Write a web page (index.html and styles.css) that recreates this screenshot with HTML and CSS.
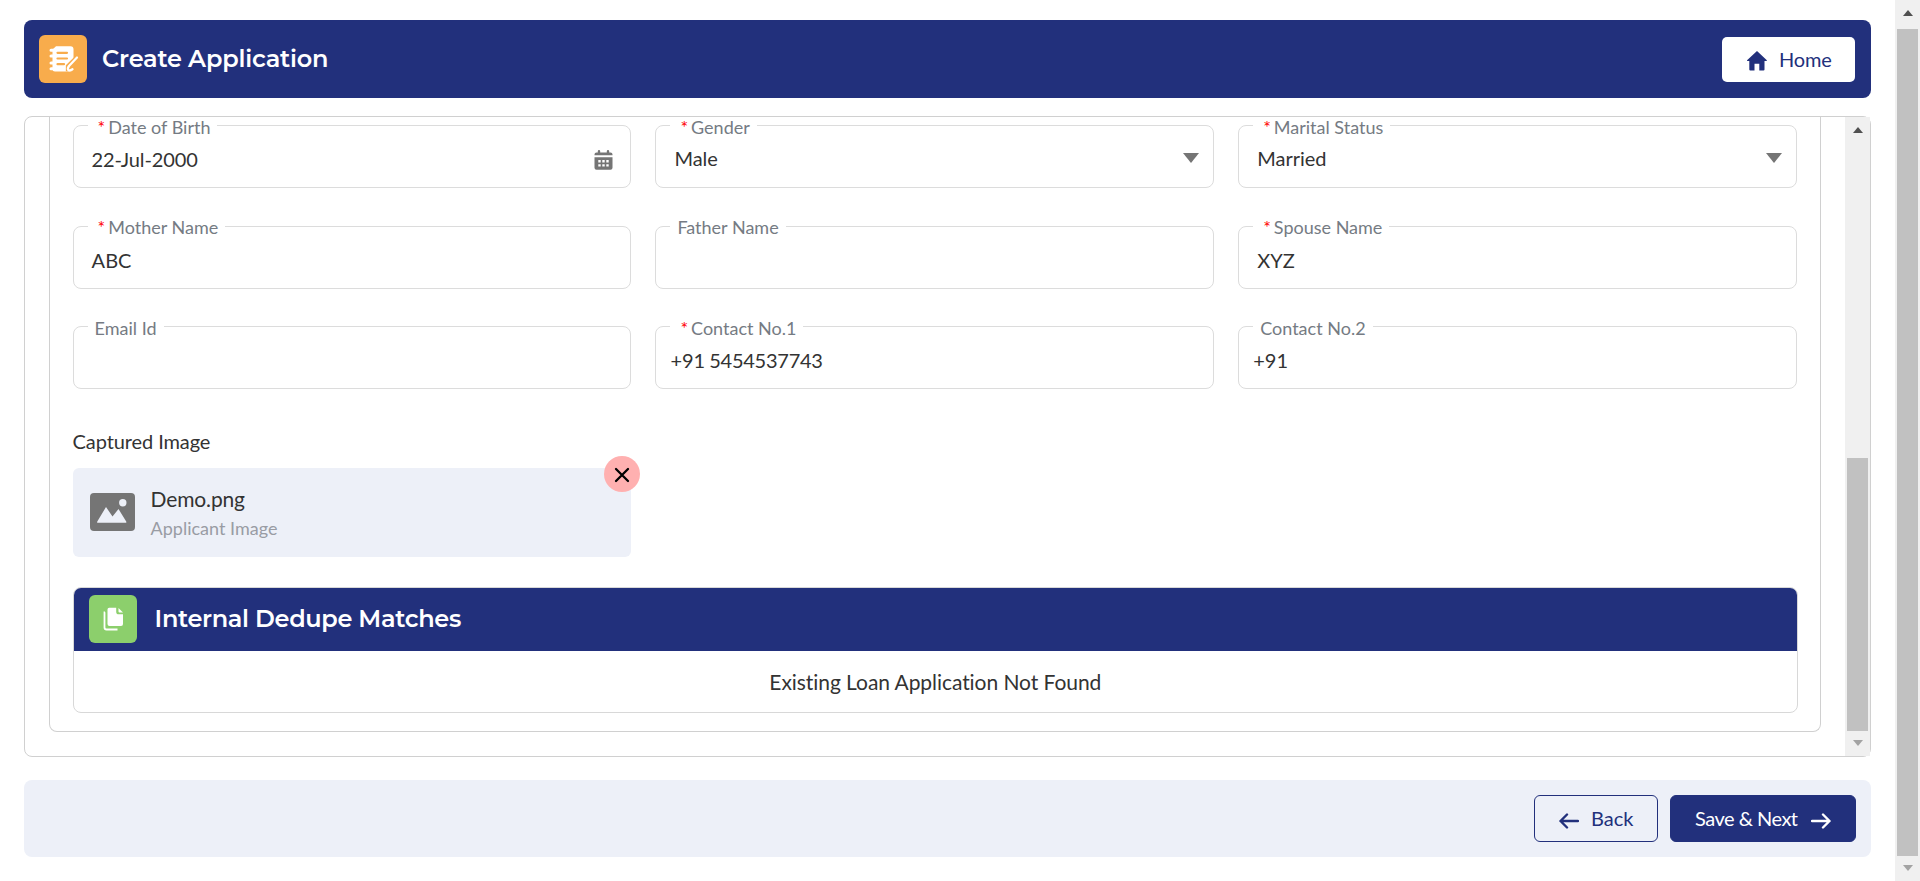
FILE: index.html
```html
<!DOCTYPE html>
<html lang="en">
<head>
<meta charset="utf-8">
<title>Create Application</title>
<link rel="stylesheet" href="styles.css">
</head>
<body>
<div class="window">
  <main class="page">
    <header class="topbar">
      <span class="tile tile-orange">
        <svg width="48" height="48" viewBox="0 0 48 48" fill="none" stroke-linecap="round">
          <path d="M17 11.300h14.500a3 3 0 0 1 3 3V33q0 3.500-3.500 3.500H16a2.500 2.500 0 0 1-2.500-2.500V14.500z" fill="#fff"/>
          <path d="M12 15.300h4M12 21h4M12 28h4M12 33.800h4" stroke="#fff" stroke-width="3"/>
          <path d="M18.500 17.800h9.500M18.500 23.500h9.500M18.500 29.200h6.500" stroke="#f8ac4c" stroke-width="2.200"/>
          <path d="M38 21.800L28.600 31v3.500h3.600L40 26.500" fill="#f8ac4c" stroke="#f8ac4c" stroke-width="3.500"/>
          <path d="M38 22.500L30 31q-1.800 2.500-.8 4 1.200 1 4.300-.800" stroke="#fff" stroke-width="2.200" stroke-linejoin="round"/>
        </svg>
      </span>
      <h1 class="title title-page">Create Application</h1>
      <button class="btn btn-home">
        <svg width="20" height="20" viewBox="0 0 20 20" fill="#22307c"><path d="M10 0L.3 9a.6.600 0 0 0 .4 1.100h1.600V18.500a1 1 0 0 0 1 1h4.200v-6.800h4.800v6.800h4.200a1 1 0 0 0 1-1V10.100h1.700a.6.600 0 0 0 .4-1.100z"/></svg>
        <span>Home</span>
      </button>
    </header>

    <section class="panel">
      <div class="panel-view">
        <div class="form-card">
          <div class="grid">
            <div class="field"><label class="label req">Date of Birth</label><span class="value date">22-Jul-2000</span>
              <svg class="calendar" width="19" height="20" viewBox="0 0 19 20" fill="#757575"><path d="M.5 4.500a2 2 0 0 1 2-2H3.800V1.200a1.200 1.200 0 0 1 2.400 0V2.500h6.600V1.200a1.200 1.200 0 0 1 2.400 0V2.500H16.500a2 2 0 0 1 2 2V5.300H.5z"/><path fill-rule="evenodd" d="M.5 7.200h18v10.600a2 2 0 0 1-2 2h-14a2 2 0 0 1-2-2zM4.300 10.100v2.400h2.400v-2.400zM8.300 10.100v2.400h2.400v-2.400zM12.300 10.100v2.400h2.400v-2.400zM4.300 14.200v2.400h2.400v-2.400zM8.300 14.200v2.400h2.400v-2.400zM12.300 14.200v2.400h2.400v-2.400z"/></svg>
            </div>
            <div class="field select"><label class="label req">Gender</label><span class="value">Male</span><span class="caret"></span></div>
            <div class="field select"><label class="label req">Marital Status</label><span class="value">Married</span><span class="caret"></span></div>
            <div class="field"><label class="label req">Mother Name</label><span class="value">ABC</span></div>
            <div class="field"><label class="label">Father Name</label></div>
            <div class="field"><label class="label req">Spouse Name</label><span class="value">XYZ</span></div>
            <div class="field"><label class="label">Email Id</label></div>
            <div class="field phone"><label class="label req">Contact No.1</label><span class="value prefix">+91</span><span class="value number">5454537743</span></div>
            <div class="field phone"><label class="label">Contact No.2</label><span class="value prefix">+91</span></div>
          </div>

          <h2 class="caption">Captured Image</h2>
          <div class="file">
            <svg class="picture" width="45" height="38" viewBox="0 0 45 38"><rect width="45" height="38" rx="4" fill="#757575"/><circle cx="32.800" cy="9.700" r="3.700" fill="#edf0f8"/><path d="M7.300 28.500L16 14l6.500 9.500L28.500 16l7.700 12.500q.6 1.300-.8 1.300H8q-1.400 0-.7-1.300z" fill="#edf0f8"/></svg>
            <div class="file-text"><span class="file-name">Demo.png</span><span class="file-kind">Applicant Image</span></div>
            <button class="remove" aria-label="Remove"><svg width="16" height="16" viewBox="0 0 16 16" stroke="#000" stroke-width="2.300" stroke-linecap="round"><path d="M2 2l12 12M14 2L2 14"/></svg></button>
          </div>

          <div class="dedupe">
            <div class="dedupe-head">
              <span class="tile tile-green">
                <svg width="48" height="48" viewBox="0 0 48 48"><path d="M19.500 12.800h7.700v3.900a2.600 2.600 0 0 0 2.600 2.600H34v9.700a2 2 0 0 1-2 2H20.500a2 2 0 0 1-2-2V14.500a1.700 1.700 0 0 1 1.700-1.700z" fill="#fff"/><path d="M29.500 13l4.500 4.500h-3.500a1 1 0 0 1-1-1z" fill="#fff"/><path d="M16 17.300h-.5v15.200a2 2 0 0 0 2 2h11" fill="none" stroke="#fff" stroke-width="1.800"/></svg>
              </span>
              <h2 class="title title-dedupe">Internal Dedupe Matches</h2>
            </div>
            <p class="dedupe-msg">Existing Loan Application Not Found</p>
          </div>
        </div>
      </div>
      <div class="scrollbar"><span class="arrow up"></span><span class="thumb thumb-panel"></span><span class="arrow down"></span></div>
    </section>

    <footer class="actions">
      <button class="btn btn-back">
        <svg width="20" height="16" viewBox="0 0 20 16" fill="none" stroke="#22307c" stroke-width="2.400" stroke-linecap="round" stroke-linejoin="round"><path d="M19 8H1.500M8 1.500L1.500 8l6.500 6.500"/></svg>
        <span>Back</span>
      </button>
      <button class="btn btn-next">
        <span>Save &amp; Next</span>
        <svg width="20" height="16" viewBox="0 0 20 16" fill="none" stroke="#fff" stroke-width="2.400" stroke-linecap="round" stroke-linejoin="round"><path d="M1 8h17.500M12 1.500L18.500 8 12 14.500"/></svg>
      </button>
    </footer>
  </main>
  <div class="scrollbar"><span class="arrow up"></span><span class="thumb thumb-page"></span><span class="arrow down"></span></div>
</div>
</body>
</html>
```
FILE: styles.css
```css
* { box-sizing: border-box; }
body { margin: 0; background: #fff; color: #333; font: 20px/24px Lato, sans-serif; font-variant-ligatures: none; overflow: hidden; }
h1, h2, p { margin: 0; font-weight: 400; }
svg { display: block; flex: none; }
.window { display: flex; height: 881px; }
.page { flex: 1; display: flex; flex-direction: column; padding: 20px 24px 24px; }

.topbar { display: flex; align-items: center; height: 78px; padding: 0 16px 0 15px; background: #22307c; border-radius: 8px; }
.tile { flex: none; width: 48px; height: 48px; border-radius: 6px; }
.tile-orange { background: #f8ac4c; }
.tile-green { background: #8ccf6c; }
.title { color: #fff; font-family: Montserrat, Inter, sans-serif; font-weight: 600; font-size: 24px; line-height: 30px; letter-spacing: -.2px; white-space: nowrap; }
.title-page { margin-left: 15px; }
.title-dedupe { margin-left: 18px; letter-spacing: -.32px; }
.btn { display: flex; align-items: center; border: 0; padding: 0; font: 20px/24px Lato, sans-serif; white-space: nowrap; }
.btn-home { margin-left: auto; width: 133px; height: 45px; padding-left: 25px; gap: 12px; background: #fff; color: #22307c; border-radius: 5px; letter-spacing: -.2px; }
.btn-home svg { margin-top: 4px; }

.panel { display: flex; height: 641px; margin-top: 18px; border: 1px solid #d0d0d0; border-radius: 8px; }
.panel-view { flex: 1; padding: 0 24px; overflow: hidden; }
.form-card { height: 615px; padding: 8px 23px 0 22.600px; border: 1px solid #d0d0d0; border-top: 0; border-radius: 0 0 8px 8px; }
.grid { display: grid; grid-template-columns: repeat(3, 1fr); gap: 37.500px 24px; }
.field { position: relative; display: flex; align-items: center; height: 63px; padding: 6px 17px 0 18px; border: 1px solid #dcdcdc; border-radius: 8px; }
.label { position: absolute; left: 14px; top: -10.200px; padding: 0 7px; background: #fff; color: #757b83; font-size: 18px; line-height: 22px; white-space: nowrap; }
.req::before { content: "*"; margin: 0 3px; color: #f00; }
.value { white-space: nowrap; }
.date { margin-top: -2px; letter-spacing: -.12px; }
.calendar { margin-left: auto; }
.select { padding-right: 14px; padding-top: 3px; }
.caret { margin: 0 0 0 auto; border: 8px solid transparent; border-top: 10px solid #757575; border-bottom: 0; }
.phone { padding-left: 14px; padding-top: 5px; gap: 4px; }
.number { margin-top: -1px; letter-spacing: -.25px; }

.caption { margin-top: 40px; font-size: 20px; line-height: 24px; letter-spacing: -.1px; }
.file { position: relative; display: flex; align-items: center; width: 558px; height: 89px; margin-top: 15px; padding-left: 17px; gap: 16px; background: #edf0f8; border-radius: 6px; }
.picture { margin-top: -2px; }
.file-text { display: flex; flex-direction: column; }
.file-name { font-size: 21px; line-height: 30px; letter-spacing: -.15px; }
.file-kind { color: #999ca4; font-size: 18px; line-height: 28px; }
.remove { position: absolute; right: -9px; top: -12px; display: flex; align-items: center; justify-content: center; width: 36px; height: 36px; padding: 1px 0 0 1px; border: 0; border-radius: 50%; background: #ffb0b0; }

.dedupe { height: 126px; margin: 30px -1px 0 0; border: 1px solid #d8d8d8; border-radius: 8px; overflow: hidden; }
.dedupe-head { display: flex; align-items: center; height: 63px; padding: 0 0 1px 15px; background: #22307c; }
.dedupe-msg { padding-top: 17px; font-size: 21px; line-height: 28px; letter-spacing: -.06px; text-align: center; }

.actions { display: flex; align-items: center; justify-content: flex-end; gap: 12px; height: 77px; margin-top: 23px; padding-right: 15px; background: #edf0f8; border-radius: 8px; }
.btn-back, .btn-next { height: 47px; padding-left: 24px; border: 1px solid #22307c; border-radius: 6px; }
.btn-back { width: 124px; gap: 12px; background: transparent; color: #22307c; }
.btn-next { width: 186px; gap: 13px; background: #22307c; color: #fff; letter-spacing: -.5px; }
.btn-back span, .btn-next span { margin-top: -2px; }
.btn-back svg, .btn-next svg { margin-top: 4px; }

.scrollbar { display: flex; flex-direction: column; align-items: center; width: 25px; background: #f0f0f0; }
.arrow { border: 5.500px solid transparent; }
.up { margin-top: 10px; border-top: 0; border-bottom: 6px solid #505050; }
.down { margin: 9px 0 10px; border-bottom: 0; border-top: 6px solid #a3a3a3; }
.thumb { width: 21px; margin-top: auto; background: #c1c1c1; }
.thumb-panel { height: 273px; }
.thumb-page { height: 827px; }
```
